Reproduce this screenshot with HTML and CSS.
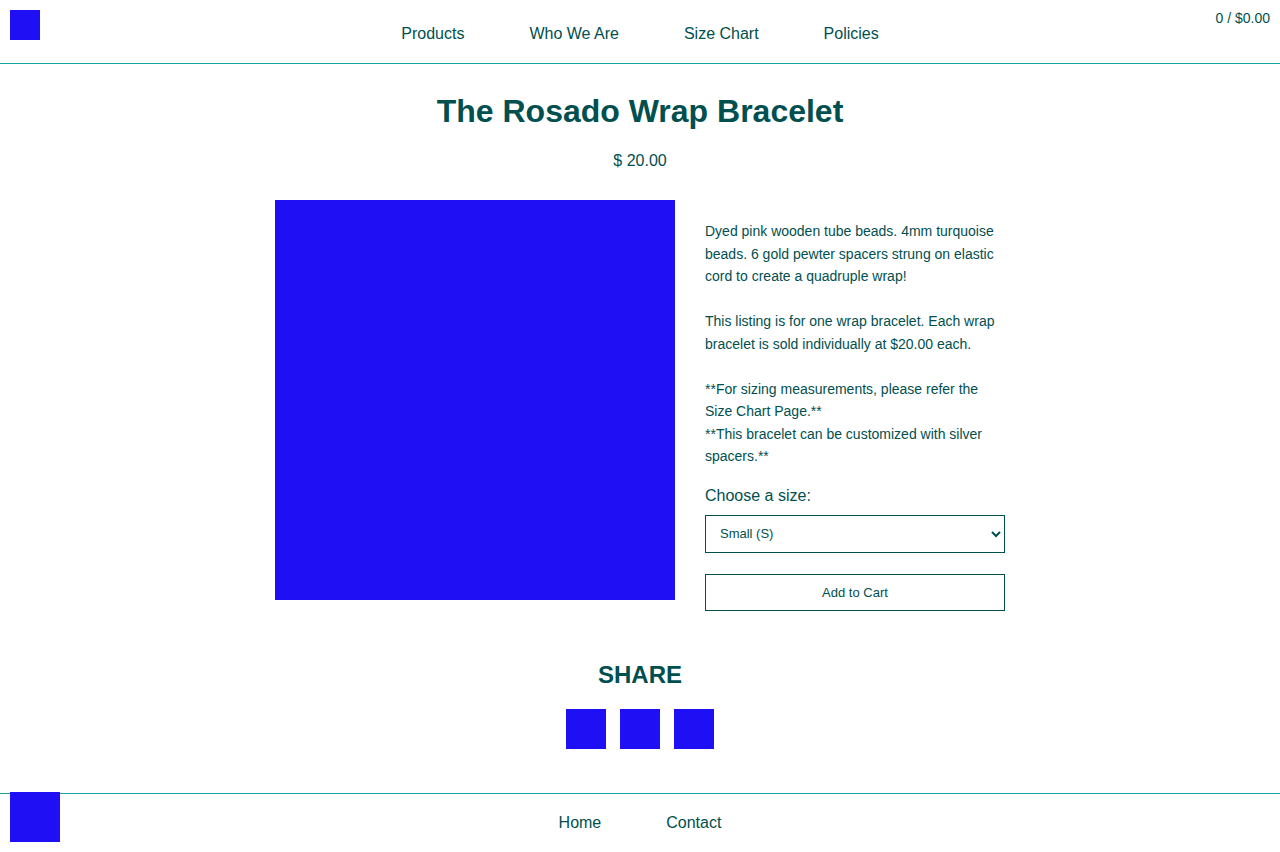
FILE: index.html
```html
<!DOCTYPE html>
<html lang="en">
<head>
<meta charset="utf-8">
<title>The Rosado Wrap Bracelet</title>
<link rel="stylesheet" href="styles.css">
</head>
<body>
<header class="site-header">
  <div class="logo-cell"><a class="logo logo-small" href="#" aria-label="Home"></a></div>
  <nav class="main-nav">
    <a href="#">Products</a>
    <a href="#">Who We Are</a>
    <a href="#">Size Chart</a>
    <a href="#">Policies</a>
  </nav>
  <div class="cart-cell"><a class="cart" href="#">0 / $0.00</a></div>
</header>

<main class="product">
  <h1 class="product-title">The Rosado Wrap Bracelet</h1>
  <p class="product-price">$ 20.00</p>

  <div class="product-body">
    <div class="product-image"></div>
    <div class="product-info">
      <p class="description">Dyed pink wooden tube beads. 4mm turquoise beads. 6 gold pewter spacers strung on elastic cord to create a quadruple wrap!<br><br>This listing is for one wrap bracelet. Each wrap bracelet is sold individually at $20.00 each.<br><br>**For sizing measurements, please refer the Size Chart Page.**<br>**This bracelet can be customized with silver spacers.**</p>
      <label class="size-label" for="size">Choose a size:</label>
      <select id="size" class="size-select">
        <option>Small (S)</option>
        <option>Medium (M)</option>
        <option>Large (L)</option>
      </select>
      <button class="add-to-cart" type="button">Add to Cart</button>
    </div>
  </div>

  <section class="share">
    <h2 class="share-title">SHARE</h2>
    <div class="share-icons">
      <a class="share-icon" href="#" aria-label="Facebook"></a>
      <a class="share-icon" href="#" aria-label="Twitter"></a>
      <a class="share-icon" href="#" aria-label="Pinterest"></a>
    </div>
  </section>
</main>

<footer class="site-footer">
  <div class="logo-cell"><a class="logo logo-footer" href="#" aria-label="Home"></a></div>
  <nav class="footer-nav">
    <a href="#">Home</a>
    <a href="#">Contact</a>
  </nav>
  <div></div>
</footer>
</body>
</html>
```

FILE: styles.css
```css
* { box-sizing: border-box; }

html, body {
  margin: 0;
  padding: 0;
  background: #ffffff;
}

body {
  font-family: "Liberation Sans", Arial, Helvetica, sans-serif;
  color: #014f4f;
}

a { color: #014f4f; text-decoration: none; }

.site-header {
  display: grid;
  grid-template-columns: 1fr auto 1fr;
  height: 64px;
  border-bottom: 1px solid #1aa3a3;
}

.logo-cell { display: flex; align-items: flex-start; }

.logo { display: block; background: #1f0ff5; }

.logo-small {
  width: 30px;
  height: 30px;
  margin: 10px 0 0 10px;
}

.main-nav {
  display: flex;
  gap: 65px;
  padding-top: 25px;
  font-size: 16px;
  line-height: 18px;
}

.cart-cell { display: flex; justify-content: flex-end; }

.cart {
  font-size: 14px;
  line-height: 16px;
  padding: 10px 10px 0 0;
}

.product {
  padding-top: 28px;
  text-align: center;
}

.product-title {
  margin: 0;
  font-size: 32px;
  line-height: 38px;
  font-weight: 700;
}

.product-price {
  margin: 22px 0 0;
  font-size: 16px;
  line-height: 18px;
}

.product-body {
  display: flex;
  justify-content: center;
  gap: 30px;
  margin-top: 30px;
  text-align: left;
}

.product-image {
  width: 400px;
  height: 400px;
  background: #1f0ff5;
  flex: none;
}

.product-info {
  width: 300px;
  display: flex;
  flex-direction: column;
  padding-top: 20px;
}

.description {
  margin: 0;
  font-size: 14px;
  line-height: 22.5px;
}

.size-label {
  margin-top: 19px;
  font-size: 16px;
  line-height: 18px;
}

.size-select {
  margin-top: 10px;
  height: 38px;
  width: 100%;
  border: 1px solid #014f4f;
  border-radius: 0;
  background: #ffffff;
  color: #014f4f;
  font-family: "Liberation Sans", Arial, sans-serif;
  font-size: 13px;
  padding: 0 10px;
}

.add-to-cart {
  margin-top: 21px;
  height: 37px;
  width: 100%;
  border: 1px solid #014f4f;
  border-radius: 0;
  background: #ffffff;
  color: #014f4f;
  font-family: "Liberation Sans", Arial, sans-serif;
  font-size: 13px;
}

.share { margin-top: 50px; }

.share-title {
  margin: 0;
  font-size: 24px;
  line-height: 28px;
  font-weight: 700;
}

.share-icons {
  display: flex;
  justify-content: center;
  gap: 14px;
  margin-top: 20px;
}

.share-icon {
  display: block;
  width: 40px;
  height: 40px;
  background: #1f0ff5;
}

.site-footer {
  display: grid;
  grid-template-columns: 1fr auto 1fr;
  margin-top: 44px;
  border-top: 1px solid #1aa3a3;
  height: 59px;
}

.logo-footer {
  width: 50px;
  height: 50px;
  margin: -2px 0 0 10px;
  position: relative;
}

.footer-nav {
  display: flex;
  gap: 65px;
  padding-top: 20px;
  font-size: 16px;
  line-height: 18px;
}
```
